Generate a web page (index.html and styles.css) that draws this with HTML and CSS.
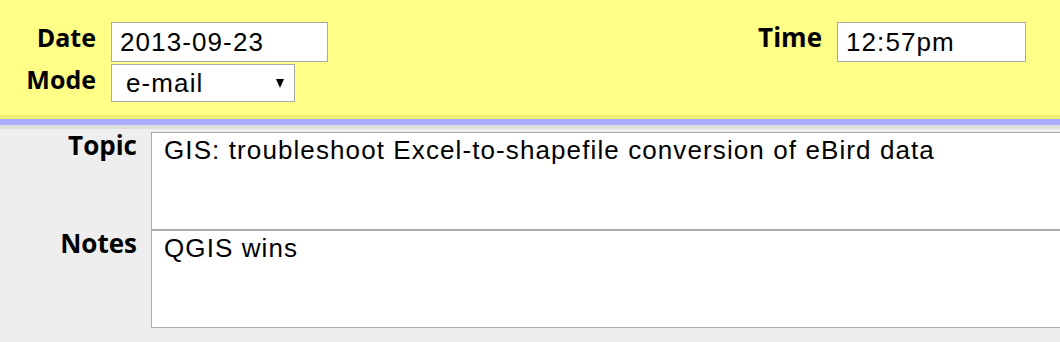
FILE: index.html
```html
<!DOCTYPE html>
<html lang="en">
<head>
    <meta charset="UTF-8">
    <meta name="viewport" content="width=device-width, initial-scale=1.0">
    <title>Contact Log Entry</title>
    <link rel="stylesheet" href="styles.css">
</head>
<body>
    <form class="entry">
        <div class="header">
            <div class="fields">
                <label class="label" for="date">Date</label>
                <input class="text-input date-input" id="date" type="text" value="2013-09-23">
                <label class="label" for="mode">Mode</label>
                <span class="select-wrap">
                    <select class="select" id="mode">
                        <option>e-mail</option>
                        <option>phone</option>
                        <option>in person</option>
                    </select>
                    <svg class="select-arrow" width="8" height="9" viewBox="0 0 8 9"><path d="M0 0H8L4 9Z" fill="#000"/></svg>
                </span>
            </div>
            <div class="fields">
                <label class="label label-big" for="time">Time</label>
                <input class="text-input time-input" id="time" type="text" value="12:57pm">
            </div>
        </div>
        <div class="band-blue"></div>
        <div class="band-grey"></div>

        <div class="body-rows">
            <label class="label label-big" for="topic">Topic</label>
            <textarea class="area" id="topic">GIS: troubleshoot Excel-to-shapefile conversion of eBird data</textarea>
            <label class="label label-big" for="notes">Notes</label>
            <textarea class="area" id="notes">QGIS wins</textarea>
        </div>
    </form>
</body>
</html>
```

FILE: styles.css
```css
html, body {
    overflow: hidden;
}
body {
    margin: 0;
    background: #eeeeee;
    font-family: "Liberation Sans", Arial, sans-serif;
}
.header {
    background: #ffff88;
    border-bottom: 4px solid #eeee77;
    height: 93px;
    padding: 22px 34px 0 16px;
    display: flex;
    justify-content: space-between;
    align-items: flex-start;
}
.band-blue {
    height: 6px;
    background: #aaaaff;
}
.band-grey {
    height: 4px;
    background: #dddddd;
}
.fields {
    display: grid;
    grid-template-columns: auto auto;
    column-gap: 15px;
    row-gap: 2px;
    align-items: start;
}
.fields:first-child {
    grid-template-columns: 80px auto;
}
.label {
    font-family: "Open Sans", "DejaVu Sans", sans-serif;
    font-weight: 700;
    font-size: 25px;
    line-height: 25px;
    padding-top: 3px;
    text-align: right;
    color: #000;
}
.label-big {
    font-size: 26px;
}
.text-input,
.select {
    font-family: "Liberation Sans", Arial, sans-serif;
    font-size: 26px;
    letter-spacing: 1.1px;
    color: #000;
    background: #fff;
    border: 1px solid #aaaaaa;
    border-radius: 0;
    margin: 0;
    box-sizing: border-box;
    outline: none;
}
.text-input {
    height: 40px;
    padding: 0 8px;
}
.date-input {
    width: 217px;
}
.time-input {
    width: 189px;
}
.select-wrap {
    position: relative;
    display: block;
    width: 184px;
}
.select {
    appearance: none;
    -webkit-appearance: none;
    display: block;
    width: 184px;
    height: 38px;
    padding: 0 14px;
}
.select-arrow {
    position: absolute;
    left: 165px;
    top: 15px;
}
.body-rows {
    display: grid;
    grid-template-columns: 137px 1000px;
    column-gap: 14px;
    padding-top: 3px;
}
.body-rows .label {
    padding-top: 1px;
}
.area {
    display: block;
    box-sizing: border-box;
    height: 98px;
    width: 1000px;
    margin: 0;
    padding: 2px 12px;
    border: 1px solid #aaaaaa;
    background: #fff;
    font-family: "Liberation Sans", Arial, sans-serif;
    font-size: 26px;
    letter-spacing: 1.1px;
    color: #000;
    resize: none;
    overflow: hidden;
    outline: none;
}
```
